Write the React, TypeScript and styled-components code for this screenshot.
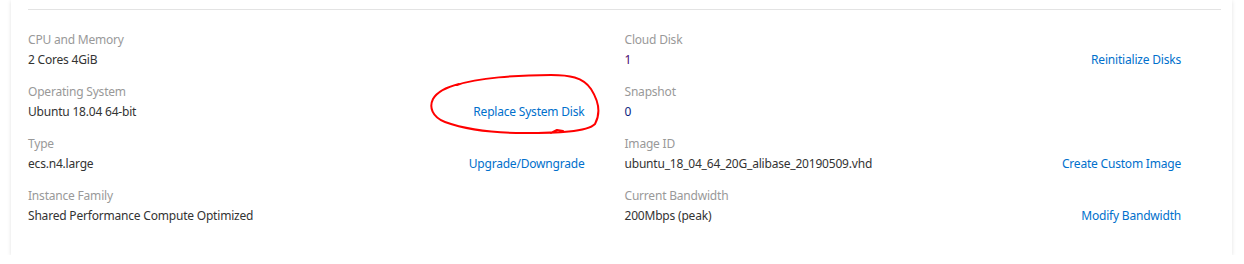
import React from 'react';
import styled, { createGlobalStyle } from 'styled-components';

const GlobalStyle = createGlobalStyle`
  html, body {
    margin: 0;
    padding: 0;
    background: #ffffff;
  }
  body {
    font-family: "Noto Sans", "Open Sans", Arial, sans-serif;
    font-size: 12px;
    letter-spacing: -0.2px;
  }
`;

interface InfoItem {
  label: string;
  value: string;
  valueColor?: string;
  action?: string;
  highlight?: boolean;
}

const LEFT_ITEMS: InfoItem[] = [
  { label: 'CPU and Memory', value: '2 Cores 4GiB' },
  { label: 'Operating System', value: 'Ubuntu 18.04 64-bit', action: 'Replace System Disk', highlight: true },
  { label: 'Type', value: 'ecs.n4.large', action: 'Upgrade/Downgrade' },
  { label: 'Instance Family', value: 'Shared Performance Compute Optimized' }
];

const RIGHT_ITEMS: InfoItem[] = [
  { label: 'Cloud Disk', value: '1', valueColor: '#4a0b6e', action: 'Reinitialize Disks' },
  { label: 'Snapshot', value: '0', valueColor: '#0a1f80' },
  { label: 'Image ID', value: 'ubuntu_18_04_64_20G_alibase_20190509.vhd', action: 'Create Custom Image' },
  { label: 'Current Bandwidth', value: '200Mbps (peak)', action: 'Modify Bandwidth' }
];

const Card = styled.section`
  margin: 0 12px 0 11px;
  padding: 9px 11px 29px 17px;
  background: #ffffff;
  box-shadow: 0 1px 4px rgba(0, 0, 0, 0.12);
`;

const Divider = styled.div`
  height: 1px;
  background: #e3e3e3;
  margin-bottom: 20px;
`;

const Columns = styled.div`
  display: grid;
  grid-template-columns: 1fr 1fr;
`;

const Column = styled.div`
  display: flex;
  flex-direction: column;
  gap: 12px;
  padding-right: 40px;
`;

const Item = styled.div`
  display: flex;
  flex-direction: column;
`;

const Label = styled.div`
  line-height: 20px;
  color: #999999;
`;

const ValueRow = styled.div`
  display: flex;
  justify-content: space-between;
  align-items: center;
  line-height: 20px;
`;

const Value = styled.span<{ $color?: string }>`
  color: ${p => p.$color || '#333333'};
`;

const ActionWrap = styled.span`
  position: relative;
`;

const Action = styled.a`
  color: #0070cc;
  text-decoration: none;
  cursor: pointer;
`;

const Scribble = styled.svg`
  position: absolute;
  right: -18px;
  top: -30px;
  width: 176px;
  height: 64px;
  overflow: visible;
  pointer-events: none;
`;

const RedCircle = () => (
  <Scribble viewBox="0 0 176 64">
    <path
      d="M 30 13 C 50 6, 90 3, 124 3 C 142 3, 156 5, 164 17 C 171 28, 174 41, 168 52 C 160 60, 130 61, 97 61 C 70 61, 40 58, 18 50 C 5 45, 2 35, 6 27 C 10 20, 20 15, 32 12 M 124 61 L 130 58 L 136 59"
      fill="none"
      stroke="#ff0000"
      strokeWidth="2"
      strokeLinecap="round"
      strokeLinejoin="round"
    />
  </Scribble>
);

const InfoColumn: React.FC<{ items: InfoItem[] }> = ({ items }) => (
  <Column>
    {items.map(item => (
      <Item key={item.label}>
        <Label>{item.label}</Label>
        <ValueRow>
          <Value $color={item.valueColor}>{item.value}</Value>
          {item.action && (
            <ActionWrap>
              <Action>{item.action}</Action>
              {item.highlight && <RedCircle />}
            </ActionWrap>
          )}
        </ValueRow>
      </Item>
    ))}
  </Column>
);

export default function App() {
  return (
    <>
      <GlobalStyle />
      <Card>
        <Divider />
        <Columns>
          <InfoColumn items={LEFT_ITEMS} />
          <InfoColumn items={RIGHT_ITEMS} />
        </Columns>
      </Card>
    </>
  );
}
